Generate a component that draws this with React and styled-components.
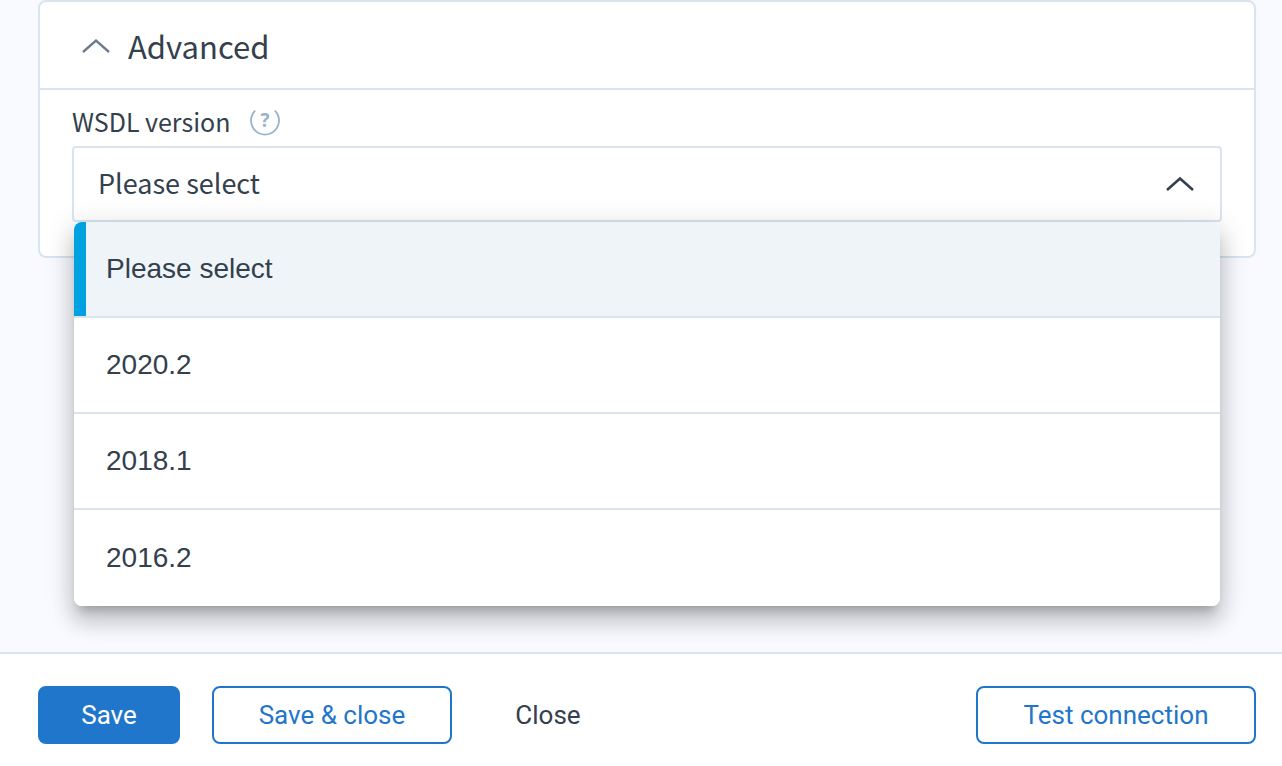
import React, { useState } from 'react'
import styled, { createGlobalStyle } from 'styled-components'

const GlobalStyle = createGlobalStyle`
    * {
        box-sizing: border-box;
    }

    body {
        margin: 0;
        background-color: #f9faff;
        color: #33404d;
        font-family: "Noto Sans CJK SC", "Noto Sans", sans-serif;
    }
`;

const Page = styled.div`
    min-height: 100vh;
    display: flex;
    flex-direction: column;
`;

const Content = styled.main`
    flex: 1;
    padding: 0 26px 0 38px;
`;

const Card = styled.section`
    background-color: #fff;
    border: 2px solid #d8e4ee;
    border-radius: 8px;
`;

const CardHeading = styled.h2`
    margin: 0;
    border-bottom: 2px solid #d8e4ee;
`;

const CardToggle = styled.button`
    display: flex;
    align-items: center;
    gap: 18px;
    width: 100%;
    height: 86px;
    padding: 2px 42px 0;
    border: none;
    background: none;
    color: inherit;
    font-family: inherit;
    font-size: 31px;
    line-height: 40px;
    text-align: left;
    cursor: pointer;
`;

const CardBody = styled.div`
    padding: 0 32px 34px;
`;

const LabelRow = styled.div`
    display: flex;
    align-items: center;
    gap: 20px;
    height: 56px;
    padding-top: 6px;
`;

const Label = styled.label`
    font-size: 25px;
    line-height: 32px;
`;

const HelpButton = styled.button`
    display: flex;
    padding: 0;
    border: none;
    background: none;
    cursor: pointer;
`;

const SelectField = styled.div`
    position: relative;
`;

const Select = styled.select`
    display: block;
    width: 100%;
    height: 76px;
    padding: 0 80px 2px 24px;
    appearance: none;
    border: 2px solid #d8e4ee;
    border-radius: 4px;
    outline: none;
    background-color: #fff;
    color: inherit;
    font-family: inherit;
    font-size: 27px;
    line-height: 40px;
    cursor: pointer;
`;

const SelectArrow = styled.span`
    position: absolute;
    top: 30px;
    right: 28px;
    display: flex;
    pointer-events: none;
`;

const Menu = styled.ul`
    position: absolute;
    top: 100%;
    left: 2px;
    right: 2px;
    z-index: 1;
    margin: 0;
    padding: 0;
    list-style: none;
    overflow: hidden;
    border-radius: 8px;
    background-color: #fff;
    box-shadow:
        0 10px 10px -6px rgba(0, 0, 0, 0.2),
        0 16px 20px 2px rgba(0, 0, 0, 0.14),
        0 6px 28px 4px rgba(0, 0, 0, 0.12);
`;

const MenuItem = styled.li`
    display: flex;
    align-items: center;
    height: 96px;
    padding-left: 32px;
    border-bottom: 2px solid #d8e4ee;
    background-color: ${props => props.$selected ? '#eff4f8' : '#fff'};
    /* the blue bar that marks the current value */
    background-image: ${props => props.$selected ? 'linear-gradient(#00a1e0, #00a1e0)' : 'none'};
    background-size: 12px 100%;
    background-repeat: no-repeat;
    font-family: "Liberation Sans", Arial, sans-serif;
    font-size: 28px;
    line-height: 32px;
    cursor: pointer;

    &:last-child {
        border-bottom: none;
    }
`;

const Footer = styled.footer`
    display: flex;
    align-items: center;
    gap: 32px;
    padding: 32px 26px 22px 38px;
    border-top: 2px solid #d8e4ee;
    background-color: #fff;
`;

const Button = styled.button`
    min-width: 240px;
    height: 58px;
    padding: 0 28px;
    border: 2px solid #1f76ca;
    border-radius: 8px;
    background-color: #fff;
    color: #1f76ca;
    font-family: Roboto, sans-serif;
    font-size: 26px;
    line-height: 32px;
    white-space: nowrap;
    cursor: pointer;
`;

const PrimaryButton = styled(Button)`
    min-width: 142px;
    background-color: #1f76ca;
    color: #fff;
`;

const PlainButton = styled(Button)`
    min-width: 128px;
    border-color: transparent;
    background-color: transparent;
    color: #33404d;
`;

const TestButton = styled(Button)`
    min-width: 280px;
    margin-left: auto;
`;

const options = ['Please select', '2020.2', '2018.1', '2016.2'];

function Chevron({ color, up, thickness }) {
    return (
        <svg width="28" height="16" viewBox="0 0 28 16" fill="none" stroke={color} strokeWidth={thickness} aria-hidden="true">
            <path d={up ? 'M1 14 14 2.5 27 14' : 'M1 2.5 14 14 27 2.5'} />
        </svg>
    )
}

// The ring is open at the top
function HelpIcon() {
    return (
        <svg width="30" height="30" viewBox="0 0 30 30" fill="none" aria-hidden="true">
            <path d="M5.2 4.6A14 14 0 1 0 24.8 4.6" stroke="#9bb2c8" strokeWidth="1.8" />
            <text x="15" y="21" textAnchor="middle" fill="#9bb2c8" fontFamily="Open Sans" fontWeight="700" fontSize="19">?</text>
        </svg>
    )
}

export default function App() {

    const [expanded, setExpanded] = useState(true);
    const [isOpen, setOpen] = useState(true);
    const [version, setVersion] = useState(options[0]);

    const choose = (option) => {
        setVersion(option);
        setOpen(false);
    };

    // The native popup is replaced by our own menu
    const toggleMenu = (event) => {
        event.preventDefault();
        setOpen(!isOpen);
    };

    return (
        <Page>
            <GlobalStyle />
            <Content>
                <Card>
                    <CardHeading>
                        <CardToggle type="button" aria-expanded={expanded} onClick={() => setExpanded(!expanded)}>
                            <Chevron color="#6b7c8f" up={expanded} thickness={2.4} />
                            Advanced
                        </CardToggle>
                    </CardHeading>
                    {expanded && <CardBody>
                        <LabelRow>
                            <Label htmlFor="wsdl-version">WSDL version</Label>
                            <HelpButton type="button" aria-label="Help">
                                <HelpIcon />
                            </HelpButton>
                        </LabelRow>
                        <SelectField>
                            <Select
                                id="wsdl-version"
                                value={version}
                                onMouseDown={toggleMenu}
                                onChange={(event) => choose(event.target.value)}
                            >
                                {options.map(option => <option key={option}>{option}</option>)}
                            </Select>
                            <SelectArrow>
                                <Chevron color="#33404d" up={isOpen} thickness={2.6} />
                            </SelectArrow>
                            {isOpen && <Menu role="listbox" aria-label="WSDL version">
                                {options.map(option => (
                                    <MenuItem
                                        key={option}
                                        role="option"
                                        aria-selected={option === version}
                                        $selected={option === version}
                                        onClick={() => choose(option)}
                                    >
                                        {option}
                                    </MenuItem>
                                ))}
                            </Menu>}
                        </SelectField>
                    </CardBody>}
                </Card>
            </Content>
            <Footer>
                <PrimaryButton type="button">Save</PrimaryButton>
                <Button type="button">Save &amp; close</Button>
                <PlainButton type="button">Close</PlainButton>
                <TestButton type="button">Test connection</TestButton>
            </Footer>
        </Page>
    )
}
